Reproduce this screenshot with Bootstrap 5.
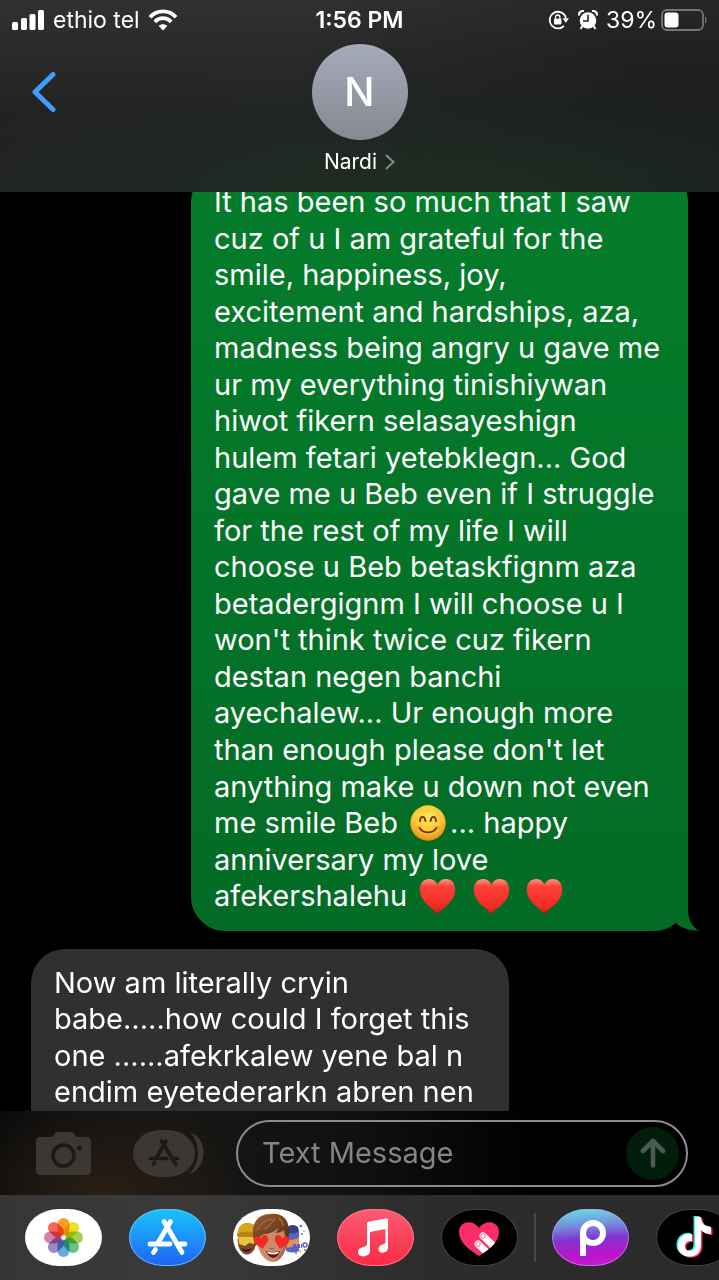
<!DOCTYPE html>
<html lang="en">
<head>
<meta charset="utf-8">
<meta name="viewport" content="width=device-width, initial-scale=1">
<title>Nardi – Messages</title>
<link href="https://cdn.jsdelivr.net/npm/bootstrap@5.3.0/dist/css/bootstrap.min.css" rel="stylesheet">
<style>
  body { background: #000; color: #fff; font-family: Inter, "Liberation Sans", sans-serif; }
  svg { display: block; flex: none; }
  .top-panel {
    height: 192px;
    background:
      radial-gradient(ellipse 75% 70% at 62% 100%, rgba(31, 46, 36, .9), rgba(31, 46, 36, 0)),
      linear-gradient(100deg, rgba(0, 0, 0, 0) 40%, rgba(0, 0, 0, .22) 85%),
      linear-gradient(#313131, #222 60%, #202221);
  }
  .status { height: 40px; font-size: 23px; line-height: 24px; }
  .status-side { flex: 1 1 0; }
  .status-time { font-weight: 600; }
  .back { width: 88px; height: 96px; padding: 0 0 0 31px; }
  .avatar { width: 96px; height: 96px; font-size: 40px; font-weight: 500; background: linear-gradient(#a5abb9, #868892); }
  .contact { font-size: 21px; line-height: 28px; }
  .chat { min-height: 0; }
  .bubble { font-size: 29px; line-height: 1.26; padding: 16px 23px; white-space: nowrap; }
  .bubble-sent { width: 497px; margin: -24px 31px 18px 0; border-radius: 34px; background: linear-gradient(#047d2b, #036b25); }
  .bubble-received { width: 478px; margin-left: 31px; border-radius: 34px 34px 0 0; background: #303032; }
  .tail { right: -12px; bottom: 0; }
  .emoji { display: inline-block; vertical-align: middle; margin: -6px 0 -2px; }
  .composer {
    height: 84px; padding: 0 31px 0 36px;
    background: radial-gradient(ellipse 150px 110px at 100px 90px, #2a1f15, rgba(30, 24, 18, 0)),
      linear-gradient(90deg, #0b0b0b, #171614 25%, #101010 50%, #000 75%);
  }
  .tool-gap { margin-right: 41px; }
  .entry { height: 67px; margin-left: 32px; border: 2px solid #8c8c8e; border-radius: 34px; padding: 0 7px 0 24px; }
  .entry input { font-size: 29px; line-height: 36px; color: #fff; }
  .entry input::placeholder { color: #858588; opacity: 1; }
  .entry input:focus { outline: 0; }
  .send { width: 53px; height: 53px; background: #021d0b; color: #626563; }
  .drawer { height: 85px; padding-left: 25px; gap: 27px; background: linear-gradient(90deg, #363636, #3a3a3a 25%, #2c2c2c 60%, #2b2b2b); }
  .app-pill { width: 77px; height: 57px; border-radius: 44% / 50%; flex: none; }
  .dark-pill { background: #000; border: 1px solid #424242 !important; }
  .rule { width: 2px; height: 49px; margin: 0 -11px; background: #484848; flex: none; }
  .petals rect { mix-blend-mode: multiply; }
  .petals { isolation: isolate; }
</style>
</head>
<body>
<div class="vh-100 d-flex flex-column overflow-hidden">

  <header class="top-panel flex-shrink-0">
    <div class="status d-flex align-items-center">
      <div class="status-side d-flex align-items-center ps-2">
        <svg class="ms-1" width="33" height="20" viewBox="0 0 33 20" fill="#fff" aria-label="Signal"><rect y="12" width="6" height="8" rx="1.5"/><rect x="9" y="8" width="6" height="12" rx="1.5"/><rect x="17.500" y="4" width="6" height="16" rx="1.500"/><rect x="26" width="6" height="20" rx="1.500"/></svg>
        <span class="ms-2">ethio tel</span>
        <svg class="ms-2" width="30" height="22" viewBox="0 0 30 22" aria-label="Wi-Fi"><g fill="none" stroke="#fff" stroke-width="3.800"><path d="M2 8.200C9 .5 21 .5 28 8.200"/><path d="M6.800 12.800C11.500 8 18.500 8 23.200 12.800"/></g><path fill="#fff" d="M15 21.500l-4.300-4.600c2.200-2.300 6.400-2.300 8.600 0z"/></svg>
      </div>
      <div class="status-time">1:56 PM</div>
      <div class="status-side d-flex align-items-center justify-content-end pe-2">
        <svg width="22" height="20" viewBox="0 0 22 20" aria-label="Rotation lock"><path d="M16.300 4.600A8.300 8.300 0 1 0 16 15.800M16.300 4.600a8 8 0 0 1 1.600 4" fill="none" stroke="#fff" stroke-width="1.800"/><path d="M14.500 8.200h6.500l-3.200 4.600z" fill="#fff"/><rect x="6" y="8.800" width="7.400" height="5.800" rx="1" fill="#fff"/><path d="M7.500 9V7.200a2.200 2.200 0 0 1 4.400 0V9" fill="none" stroke="#fff" stroke-width="1.400"/></svg>
        <svg class="mx-2" width="20" height="20" viewBox="0 0 20 20" aria-label="Alarm"><circle cx="10" cy="10.500" r="8.300" fill="#fff"/><path d="M1 5.500A4 4 0 0 1 6 1M19 5.500A4 4 0 0 0 14 1" fill="none" stroke="#fff" stroke-width="2.200"/><path d="M4.500 16l-2 2.800M15.500 16l2 2.800" stroke="#fff" stroke-width="2"/><path d="M10 4.800V11H5" fill="none" stroke="#222" stroke-width="1.600"/></svg>
        <span>39%</span>
        <svg class="ms-1 me-1" width="46" height="22" viewBox="0 0 46 22" aria-label="Battery"><rect x="1" y="1" width="41" height="20" rx="5" fill="none" stroke="#757575" stroke-width="1.800"/><rect x="3.500" y="3.500" width="14" height="15" rx="3" fill="#fff"/><path d="M44 7.500c2 1 2 6 0 7z" fill="#757575"/></svg>
      </div>
    </div>
    <div class="d-flex align-items-center mt-1">
      <div class="status-side">
        <button type="button" class="back btn border-0 d-block" aria-label="Back"><svg width="27" height="42" viewBox="0 0 27 42"><path d="M22 3.500L4 21l18 17.500" fill="none" stroke="#409cff" stroke-width="5" stroke-linecap="round" stroke-linejoin="round"/></svg></button>
      </div>
      <div class="avatar rounded-circle d-flex align-items-center justify-content-center">N</div>
      <div class="status-side"></div>
    </div>
    <div class="d-flex justify-content-center mt-2">
      <a href="#contact" class="contact d-flex align-items-center text-white text-decoration-none">Nardi
        <svg class="ms-2" width="10" height="16" viewBox="0 0 10 16"><path d="M1.500 1.500L8.500 8l-7 6.500" fill="none" stroke="#85898a" stroke-width="2" stroke-linecap="round"/></svg></a>
    </div>
  </header>

  <main class="chat flex-grow-1 d-flex flex-column align-items-start overflow-hidden">
    <div class="bubble bubble-sent position-relative align-self-end flex-shrink-0">
      It has been so much that I saw<br>cuz of u I am grateful for the<br>smile, happiness, joy,<br>excitement and hardships, aza,<br>madness being angry u gave me<br>ur my everything tinishiywan<br>hiwot fikern selasayeshign<br>hulem fetari yetebklegn... God<br>gave me u Beb even if I struggle<br>for the rest of my life I will<br>choose u Beb betaskfignm aza<br>betadergignm I will choose u I<br>won't think twice cuz fikern<br>destan negen banchi<br>ayechalew... Ur enough more<br>than enough please don't let<br>anything make u down not even<br>me smile Beb
      <svg class="emoji ms-1 me-1" width="36" height="36" viewBox="0 0 36 36" role="img" aria-label="Smiling face"><defs><radialGradient id="face" cx=".5" cy=".35" r=".65"><stop offset="0" stop-color="#ffe95a"/><stop offset=".6" stop-color="#fdc634"/><stop offset="1" stop-color="#ee8a16"/></radialGradient></defs><circle cx="18" cy="18" r="17.700" fill="url(#face)"/><path d="M5 24c1-5 6-5 7 0zM24 24c1-5 6-5 7 0z" fill="#f5812a" opacity=".35"/><g fill="none" stroke="#68380c" stroke-width="1.900" stroke-linecap="round"><path d="M10 16c.5-5.500 4.500-5.500 5.500 0M20.500 16c1-5.500 5-5.500 5.500 0M9.500 23c4 5.800 13 5.800 17 0"/></g></svg>... happy<br>anniversary my love<br>afekershalehu
      <svg class="emoji ms-1" width="37" height="37" viewBox="0 0 37 37" role="img" aria-label="Red heart"><defs><linearGradient id="red" x2="0" y2="1"><stop offset="0" stop-color="#ff9585"/><stop offset=".22" stop-color="#fc4038"/><stop offset=".8" stop-color="#f02a22"/><stop offset="1" stop-color="#c8150f"/></linearGradient><path id="heart" d="M18.500 36.500C15 30 .8 25 .8 11.500.8 5 5 1 10 1c4 0 7 2 8.500 5.500C20 3 23 1 27 1c5 0 9.200 4 9.200 10.500C36.200 25 22 30 18.500 36.500z"/></defs><use href="#heart" fill="url(#red)"/></svg>&nbsp;
      <svg class="emoji" width="37" height="37" viewBox="0 0 37 37" role="img" aria-label="Red heart"><use href="#heart" fill="url(#red)"/></svg>&nbsp;
      <svg class="emoji" width="37" height="37" viewBox="0 0 37 37" role="img" aria-label="Red heart"><use href="#heart" fill="url(#red)"/></svg>
      <svg class="tail position-absolute" width="32" height="35" viewBox="0 0 32 35"><path d="M20 0V13C20 23 24 31 31 34.500 22 35 13 32 8 27z" fill="#036b25"/></svg>
    </div>
    <div class="bubble bubble-received flex-shrink-0">Now am literally cryin<br>babe.....how could I forget this<br>one ......afekrkalew yene bal n<br>endim eyetederarkn abren nen</div>
  </main>

  <form class="composer d-flex align-items-center flex-shrink-0">
    <button type="button" class="btn p-0 border-0 tool-gap" aria-label="Camera"><svg width="56" height="46" viewBox="0 0 56 46"><path d="M5 7h10c3 0 3-5 7-5h13c4 0 4 5 7 5h8q5 0 5 5v28q0 5-5 5H5q-5 0-5-5V12q0-5 5-5z" fill="#3b3733"/><circle cx="27.500" cy="25.500" r="10.500" fill="none" stroke="#1d1915" stroke-width="3.600"/><circle cx="43.500" cy="18" r="2.600" fill="#1d1915"/></svg></button>
    <button type="button" class="btn p-0 border-0" aria-label="Apps"><svg width="71" height="47" viewBox="0 0 71 47"><path d="M58 3C75 8 75 39 56 44 68 33 67 14 58 3z" fill="#3b3733"/><rect width="62" height="47" rx="27" ry="23.500" fill="#3b3733"/><g fill="none" stroke="#1d1a17" stroke-width="3.600" stroke-linecap="round"><path d="M33 11L23.500 27.500M28.500 11L43 34.500M17.500 28.500H34M41 28.500h3.500M21.500 32.500L20.500 34"/></g></svg></button>
    <div class="entry d-flex align-items-center flex-grow-1">
      <input type="text" class="flex-grow-1 w-100 bg-transparent border-0 p-0" placeholder="Text Message" aria-label="Text Message">
      <button type="submit" class="send btn border-0 rounded-circle p-0 d-flex align-items-center justify-content-center flex-shrink-0" aria-label="Send"><svg width="26" height="30" viewBox="0 0 26 30"><path d="M13 27.500V4M3 13L13 3l10 10" fill="none" stroke="#4c5a50" stroke-width="4.600" stroke-linecap="round" stroke-linejoin="round"/></svg></button>
    </div>
  </form>

  <nav class="drawer d-flex align-items-center flex-shrink-0 overflow-hidden" aria-label="Message apps">
    <button type="button" class="app-pill btn border-0 p-0 overflow-hidden bg-white" aria-label="Photos">
      <svg width="77" height="57" viewBox="0 0 77 57"><g class="petals" transform="translate(38.500 28.500)"><rect x="-6" y="-19.500" width="12" height="17.500" rx="6" fill="#fba026"/><rect x="-6" y="-19.500" width="12" height="17.500" rx="6" fill="#eedf20" transform="rotate(45)"/><rect x="-6" y="-19.500" width="12" height="17.500" rx="6" fill="#a5d052" transform="rotate(90)"/><rect x="-6" y="-19.500" width="12" height="17.500" rx="6" fill="#66c28b" transform="rotate(135)"/><rect x="-6" y="-19.500" width="12" height="17.500" rx="6" fill="#65a9e0" transform="rotate(180)"/><rect x="-6" y="-19.500" width="12" height="17.500" rx="6" fill="#a087c5" transform="rotate(225)"/><rect x="-6" y="-19.500" width="12" height="17.500" rx="6" fill="#d382b0" transform="rotate(270)"/><rect x="-6" y="-19.500" width="12" height="17.500" rx="6" fill="#f96857" transform="rotate(315)"/></g></svg>
    </button>
    <button type="button" class="app-pill btn border-0 p-0 overflow-hidden" aria-label="App Store">
      <svg width="77" height="57" viewBox="0 0 77 57"><defs><linearGradient id="store" x2="0" y2="1"><stop offset="0" stop-color="#19c4fb"/><stop offset="1" stop-color="#1f63f3"/></linearGradient></defs><rect width="77" height="57" fill="url(#store)"/><rect x=".5" y=".5" width="76" height="56" rx="34" ry="28" fill="none" stroke="#7bb9fb"/><g fill="none" stroke="#fff" stroke-width="4.800" stroke-linecap="round"><path d="M41.500 12.500L29.500 33M35 12.500L53 43.500M21 35H41M51 35h5M26.500 40.500L24.500 43.500"/></g></svg>
    </button>
    <button type="button" class="app-pill btn border-0 p-0 overflow-hidden bg-white" aria-label="Memoji">
      <svg width="77" height="57" viewBox="0 0 77 57">
        <defs><linearGradient id="hair" x2="1" y2="1"><stop stop-color="#9b6238"/><stop offset=".5" stop-color="#75451f"/><stop offset="1" stop-color="#51301b"/></linearGradient></defs>
        <ellipse cx="14" cy="31" rx="9.500" ry="14.500" fill="#79482a"/><path d="M4 27c0-17 18-17 22-4v6z" fill="#d9a51c"/><path d="M4 25c5-3 14-3 20 0v3H5z" fill="#b78312"/><path d="M5 28h18l-2 7-5-1-4 3-6-2z" fill="#eec33c"/><path d="M8 39c3 2 8 2 11 0-2 5-8 5-11 0z" fill="#32150e"/>
        <path d="M53 20q8-5 13 0v22q-6 3-13 0z" fill="#5b62c5"/><path d="M54 18q6-4 11 0v5q-6 3-11 0z" fill="#33418d"/><path d="M54 32l12-3v7l-12 3z" fill="#dc9551"/><circle cx="72" cy="36" r="2" fill="none" stroke="#6358d5" stroke-width="1.500"/><path d="M60 37h9" stroke="#6358d5" stroke-width="4" stroke-dasharray="3 1"/><g fill="#3a83e8"><circle cx="68" cy="17" r="1.300"/><circle cx="69" cy="25" r="1"/><circle cx="63" cy="44" r="1"/><circle cx="72" cy="41" r="1"/></g><g fill="#efc735"><circle cx="71" cy="22" r="1"/><circle cx="67" cy="42" r="1.300"/></g>
        <path d="M23 24c2-10 29-10 31 0 1 13-4 29-14 29S23 39 23 24z" fill="#cd8a67"/><path d="M50 20c3 10 0 24-8 32 10-2 14-18 12-30z" fill="#b06b4c"/>
        <path d="M21 32C17 17 23 5 37 5c15-2 22 9 18 27-2-3-3-7-4-11-2 2-5 3-9 3 2-2 3-3 3-5-4 4-9 6-14 6-3 1-6 4-7 8z" fill="url(#hair)"/><path d="M24 21c3-6 8-10 15-11M31 20c5-2 8-6 11-11M50 17c0-3-2-6-4-8" stroke="#aa7044" stroke-width="1.200" fill="none"/>
        <path d="M0 0C-3-4-8-5-9-10c-1-5 6-7 9-2 3-5 10-3 9 2C8-5 3-4 0 0z" transform="translate(30 40) rotate(-12) scale(.8 .9)" fill="#f22b25"/><path d="M0 0C-3-4-8-5-9-10c-1-5 6-7 9-2 3-5 10-3 9 2C8-5 3-4 0 0z" transform="translate(47 40) rotate(12) scale(.8 .9)" fill="#f22b25"/>
        <path d="M37 39q2 2 4 0" stroke="#945238" fill="none"/><path d="M33 42q6 2 14 0c-2 9-11 9-14 0z" fill="#5c1715"/><path d="M34 42.500q6 2 12 0l-1 2q-5 2-10 0z" fill="#fff"/>
      </svg>
    </button>
    <button type="button" class="app-pill btn border-0 p-0 overflow-hidden" aria-label="Music">
      <svg width="77" height="57" viewBox="0 0 77 57"><defs><linearGradient id="music" x2="0" y2="1"><stop stop-color="#fb5c73"/><stop offset="1" stop-color="#fb2a44"/></linearGradient></defs><rect width="77" height="57" fill="url(#music)"/><rect x=".5" y=".5" width="76" height="56" rx="34" ry="28" fill="none" stroke="#fc7f8e"/><path d="M30 14.500q0-1.500 1.500-1.800L49 9.500q2-.3 2 1.500V39c0 5-9.500 7-9.500 1 0-5 7-4 7-7V20L33 23v19c0 6-12 8-12 1 0-6 9-4 9-8z" fill="#fff"/></svg>
    </button>
    <button type="button" class="app-pill dark-pill btn p-0 overflow-hidden" aria-label="Digital Touch">
      <svg width="75" height="55" viewBox="0 0 75 55"><defs><path id="touch" d="M37 46C28 40 17 33 17 22c0-11 14-13 20-4 6-9 20-7 20 4 0 11-11 18-20 24z"/><clipPath id="touch-clip"><use href="#touch"/></clipPath></defs><use href="#touch" fill="#fb2d6b"/><g clip-path="url(#touch-clip)"><path d="M41 26l20 19M36 34l19 18" stroke="#fff" stroke-width="7" stroke-linecap="round"/><path d="M47 38l6-4M43 44l5-4" stroke="#f4b9cc" stroke-width="1"/></g><g fill="#fff" stroke="#fb6c97"><circle cx="41" cy="26" r="2.300"/><circle cx="36" cy="34" r="2.300"/></g></svg>
    </button>
    <div class="rule"></div>
    <button type="button" class="app-pill btn border-0 p-0 overflow-hidden" aria-label="Picsart">
      <svg width="77" height="57" viewBox="0 0 77 57"><defs><linearGradient id="pics" x1=".45" x2=".55" y2="1"><stop stop-color="#66dce5"/><stop offset=".3" stop-color="#7687dc"/><stop offset=".52" stop-color="#8234d0"/><stop offset=".8" stop-color="#ba15cc"/><stop offset="1" stop-color="#c31cce"/></linearGradient></defs><rect width="77" height="57" fill="url(#pics)"/><rect x=".5" y=".5" width="76" height="56" rx="34" ry="28" fill="none" stroke="#b6a5e3" stroke-opacity=".7"/><g fill="none" stroke="#fff" stroke-width="6"><circle cx="41" cy="24" r="10"/><path d="M31 24v23"/></g></svg>
    </button>
    <button type="button" class="app-pill dark-pill btn p-0 overflow-hidden" aria-label="TikTok">
      <svg width="75" height="55" viewBox="0 0 75 55"><defs><path id="tok" d="M38 7h6c0 6 4 10 10 10v7c-4 0-7-1-10-4v15c0 16-23 15-23 1 0-8 6-13 14-12v7c-9-1-9 10-2 10 4 0 5-3 5-6z"/></defs><use href="#tok" x="-1.500" y="-1" fill="#35eee5"/><use href="#tok" x="1.500" y="1" fill="#f62b58"/><use href="#tok" fill="#fff"/></svg>
    </button>
  </nav>
</div>
<script src="https://cdn.jsdelivr.net/npm/bootstrap@5.3.0/dist/js/bootstrap.bundle.min.js"></script>
</body>
</html>
